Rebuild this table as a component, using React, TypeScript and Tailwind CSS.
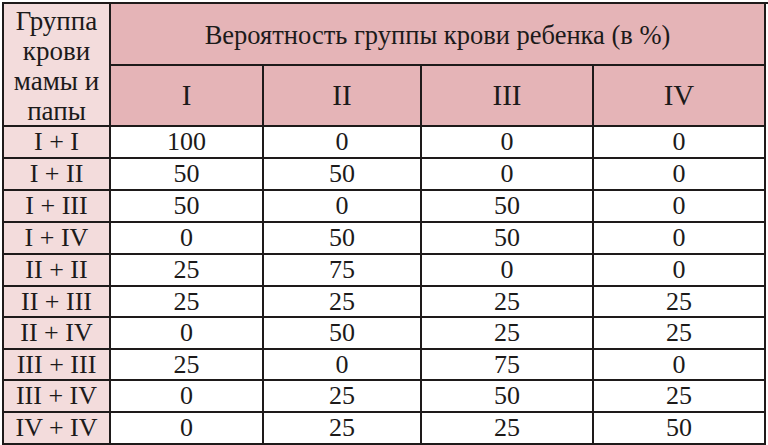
import React from "react";

const rows: [string, string, string, string, string][] = [
  ["I + I", "100", "0", "0", "0"],
  ["I + II", "50", "50", "0", "0"],
  ["I + III", "50", "0", "50", "0"],
  ["I + IV", "0", "50", "50", "0"],
  ["II + II", "25", "75", "0", "0"],
  ["II + III", "25", "25", "25", "25"],
  ["II + IV", "0", "50", "25", "25"],
  ["III + III", "25", "0", "75", "0"],
  ["III + IV", "0", "25", "50", "25"],
  ["IV + IV", "0", "25", "25", "50"],
];

const cell = "border-r-2 border-b-2 border-[#1e1a1a] flex items-center justify-center text-center";

export default function App() {
  return (
    <div className="w-[768px] h-[445px] bg-white pl-[2px] pt-[2px] overflow-hidden font-['Liberation_Serif','Times_New_Roman',serif] text-[#1c1a1a]">
      <div className="grid w-[766px] grid-cols-[107px_153px_158px_172px_172px] grid-rows-[62px_61px_32px_32px_32px_32px_32px_31px_32px_31px_32px_32px] border-l-2 border-t-2 border-[#1e1a1a] leading-none">
        <div className={`${cell} row-span-2 bg-[#f3dcdc] flex-col text-[27px] leading-[30px] pt-[2px]`}>
          <span>Группа</span>
          <span>крови</span>
          <span>мамы и</span>
          <span>папы</span>
        </div>
        <div className={`${cell} col-span-4 bg-[#e5b4b7] text-[26.5px] pt-[2px]`}>
          Вероятность группы крови ребенка (в %)
        </div>
        {["I", "II", "III", "IV"].map((h) => (
          <div key={h} className={`${cell} bg-[#e5b4b7] text-[29px]`}>
            {h}
          </div>
        ))}
        {rows.map((r) => (
          <React.Fragment key={r[0]}>
            <div className={`${cell} bg-[#f3dcdc] text-[26px] whitespace-nowrap`}>{r[0]}</div>
            {r.slice(1).map((v, j) => (
              <div key={j} className={`${cell} bg-white text-[26px]`}>
                {v}
              </div>
            ))}
          </React.Fragment>
        ))}
      </div>
    </div>
  );
}
